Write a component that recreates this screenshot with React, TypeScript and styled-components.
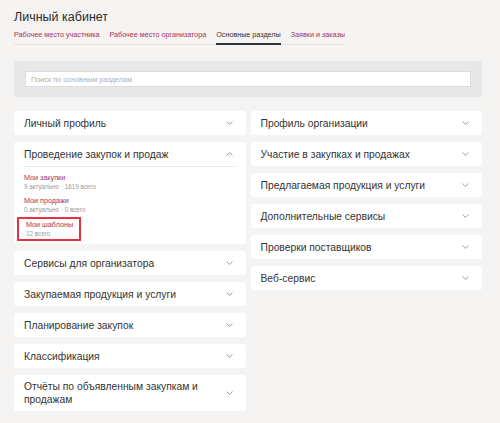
import React from "react";
import styled, { createGlobalStyle } from "styled-components";

const GlobalStyle = createGlobalStyle`
  * { box-sizing: border-box; margin: 0; padding: 0; }
  body {
    background: #f5f4f2;
    font-family: "Liberation Sans", Arial, sans-serif;
    color: #333;
  }
`;

type SubItem = { title: string; meta: string; highlighted?: boolean };
type Section = { title: string; open?: boolean; items?: SubItem[] };

const leftSections: Section[] = [
  { title: "Личный профиль" },
  {
    title: "Проведение закупок и продаж",
    open: true,
    items: [
      { title: "Мои закупки", meta: "9 актуально · 1619 всего" },
      { title: "Мои продажи", meta: "0 актуально · 0 всего" },
      { title: "Мои шаблоны", meta: "12 всего", highlighted: true },
    ],
  },
  { title: "Сервисы для организатора" },
  { title: "Закупаемая продукция и услуги" },
  { title: "Планирование закупок" },
  { title: "Классификация" },
  { title: "Отчёты по объявленным закупкам и продажам" },
];

const rightSections: Section[] = [
  { title: "Профиль организации" },
  { title: "Участие в закупках и продажах" },
  { title: "Предлагаемая продукция и услуги" },
  { title: "Дополнительные сервисы" },
  { title: "Проверки поставщиков" },
  { title: "Веб-сервис" },
];

const tabs = [
  "Рабочее место участника",
  "Рабочее место организатора",
  "Основные разделы",
  "Заявки и заказы",
];

export default function App() {
  return (
    <>
      <GlobalStyle />
      <Page>
        <Title>Личный кабинет</Title>
        <Tabs>
          {tabs.map((t) => (
            <Tab key={t} $active={t === "Основные разделы"}>
              {t}
            </Tab>
          ))}
        </Tabs>

        <SearchPanel>
          <SearchInput placeholder="Поиск по основным разделам" />
        </SearchPanel>

        <Columns>
          <Column>
            {leftSections.map((s) => (
              <SectionCard key={s.title} section={s} />
            ))}
          </Column>
          <Column>
            {rightSections.map((s) => (
              <SectionCard key={s.title} section={s} />
            ))}
          </Column>
        </Columns>
      </Page>
    </>
  );
}

function SectionCard({ section }: { section: Section }) {
  return (
    <Card>
      <CardHeader>
        <CardTitle>{section.title}</CardTitle>
        <Chevron up={section.open} />
      </CardHeader>
      {section.open && section.items && (
        <CardBody>
          {section.items.map((it) => (
            <Item key={it.title} $highlighted={it.highlighted}>
              <ItemLink href="#">{it.title}</ItemLink>
              <ItemMeta>{it.meta}</ItemMeta>
            </Item>
          ))}
        </CardBody>
      )}
    </Card>
  );
}

function Chevron({ up }: { up?: boolean }) {
  return (
    <ChevronIcon width="7" height="4" viewBox="0 0 7 4">
      <polyline
        points={up ? "0.6,3.5 3.5,0.6 6.4,3.5" : "0.6,0.5 3.5,3.4 6.4,0.5"}
        fill="none"
        stroke="#9a9a9a"
        strokeWidth="1"
      />
    </ChevronIcon>
  );
}

const Page = styled.div`
  width: 500px;
  padding: 9px 18px 12px 14px;
`;

const Title = styled.h1`
  font-size: 12.5px;
  font-weight: 400;
  line-height: 17px;
  color: #2b2b2b;
`;

const Tabs = styled.div`
  display: flex;
  width: fit-content;
  gap: 10px;
  margin-top: 4px;
  border-bottom: 1px solid #e6e4e2;
`;

const Tab = styled.a<{ $active?: boolean }>`
  display: block;
  font-size: 7.2px;
  line-height: 10px;
  padding-bottom: 3px;
  color: ${(p) => (p.$active ? "#333" : "#a3325f")};
  border-bottom: 2px solid ${(p) => (p.$active ? "#333" : "transparent")};
  margin-bottom: -1px;
  cursor: pointer;
`;

const SearchPanel = styled.div`
  margin-top: 16px;
  background: #e8e8e8;
  border-radius: 3px;
  padding: 10px 11px;
`;

const SearchInput = styled.input`
  display: block;
  width: 100%;
  height: 16px;
  border: 1px solid #dcdcdc;
  background: #fff;
  padding: 0 5px;
  font-family: "Liberation Sans", Arial, sans-serif;
  font-size: 7.3px;
  outline: none;
  &::placeholder {
    color: #b0b0b0;
  }
`;

const Columns = styled.div`
  display: grid;
  grid-template-columns: 1fr 1fr;
  column-gap: 5px;
  margin-top: 14px;
  align-items: start;
`;

const Column = styled.div`
  display: flex;
  flex-direction: column;
  gap: 7px;
`;

const Card = styled.div`
  background: #fff;
  border-radius: 3px;
`;

const CardHeader = styled.div`
  display: flex;
  align-items: center;
  justify-content: space-between;
  min-height: 24px;
  padding: 5px 13px 5px 10px;
`;

const CardTitle = styled.span`
  font-size: 10.3px;
  line-height: 13px;
  color: #333;
  padding-right: 20px;
`;

const ChevronIcon = styled.svg`
  flex-shrink: 0;
`;

const CardBody = styled.div`
  margin: 0 10px;
  border-top: 1px solid #ebebeb;
  padding: 4px 0 3px;
  display: flex;
  flex-direction: column;
  gap: 1px;
`;

const Item = styled.div<{ $highlighted?: boolean }>`
  display: flex;
  flex-direction: column;
  gap: 1px;
  padding: 2px 0;
  align-self: flex-start;
  ${(p) =>
    p.$highlighted &&
    `
    margin-left: -7px;
    padding: 1px 6px 1px 7px;
    border: 2px solid #e53340;
  `}
`;

const ItemLink = styled.a`
  font-size: 7.2px;
  line-height: 9px;
  color: #a3325f;
  text-decoration: none;
`;

const ItemMeta = styled.span`
  font-size: 6.3px;
  line-height: 8px;
  color: #9a9a9a;
`;
